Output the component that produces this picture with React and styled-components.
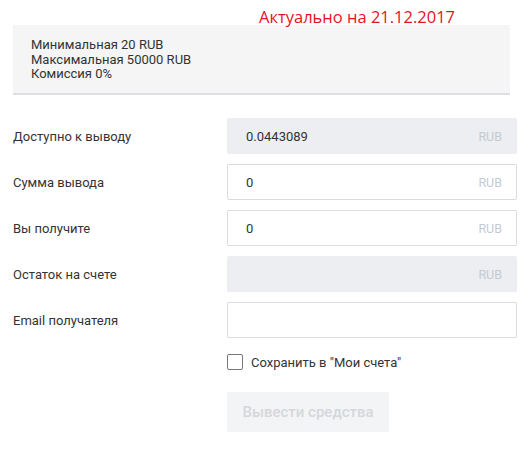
import styled, { createGlobalStyle } from "styled-components";
import { Fragment } from "react";

const Global = createGlobalStyle`
	body {
		margin: 0;
		background: #fff;
		font-family: Roboto, "Liberation Sans", sans-serif;
		color: #333;
	}
`;

const Page = styled.div`
	width: 530px;
	padding-left: 13px;
	box-sizing: border-box;
`;

const Notice = styled.div`
	height: 25px;
	padding-left: 246px;
	font-family: "Open Sans", "Liberation Sans", sans-serif;
	font-size: 16.5px;
	line-height: 34px;
	color: #e5131b;
	white-space: nowrap;
	position: relative;
	z-index: 1;
`;

const Limits = styled.div`
	width: 497px;
	height: 70px;
	box-sizing: border-box;
	padding: 13px 18px 0;
	background: #f5f5f5;
	border-bottom: 2px solid #dcdee2;
	font-size: 13px;
	line-height: 14.5px;
	color: #333;
`;

const Form = styled.div`
	display: grid;
	grid-template-columns: 214px 290px;
	row-gap: 10px;
	margin-top: 23px;
`;

const Label = styled.div`
	display: flex;
	align-items: center;
	font-size: 13px;
	color: #333;
`;

const Field = styled.div`
	display: flex;
	align-items: center;
	justify-content: space-between;
	box-sizing: border-box;
	height: 36px;
	padding: 0 14px 0 18px;
	border-radius: 2px;
	border: 1px solid ${(p) => (p.$disabled ? "#eceef1" : "#dcdcdc")};
	background: ${(p) => (p.$disabled ? "#eceef1" : "#fff")};
	font-size: 13px;
	color: #333;
`;

const Currency = styled.span`
	font-size: 12.5px;
	color: #c6cad0;
`;

const CheckRow = styled.label`
	grid-column: 2;
	display: flex;
	align-items: center;
	gap: 8px;
	height: 16px;
	margin-top: 6px;
	font-size: 13px;
	color: #333;
`;

const Box = styled.span`
	width: 14px;
	height: 14px;
	border: 1px solid #777;
	border-radius: 2px;
	background: #fff;
`;

const Submit = styled.button`
	grid-column: 2;
	justify-self: start;
	display: flex;
	align-items: center;
	justify-content: center;
	width: 162px;
	height: 40px;
	margin-top: 12px;
	border: none;
	border-radius: 1px;
	background: #f3f4f6;
	color: #d4d7db;
	font-family: Roboto, "Liberation Sans", sans-serif;
	font-size: 15px;
	font-weight: 500;
	padding: 0;
`;

const rows = [
	{ label: "Доступно к выводу", value: "0.0443089", currency: "RUB", disabled: true },
	{ label: "Сумма вывода", value: "0", currency: "RUB" },
	{ label: "Вы получите", value: "0", currency: "RUB" },
	{ label: "Остаток на счете", value: "", currency: "RUB", disabled: true },
	{ label: "Email получателя", value: "", currency: "" },
];

export default function App() {
	return (
		<Page>
			<Global />
			<Notice>Актуально на 21.12.2017</Notice>
			<Limits>
				<div>Минимальная 20 RUB</div>
				<div>Максимальная 50000 RUB</div>
				<div>Комиссия 0%</div>
			</Limits>
			<Form>
				{rows.map((r) => (
					<Fragment key={r.label}>
						<Label>{r.label}</Label>
						<Field $disabled={r.disabled}>
							<span>{r.value}</span>
							<Currency>{r.currency}</Currency>
						</Field>
					</Fragment>
				))}
				<CheckRow>
					<Box />
					Сохранить в "Мои счета"
				</CheckRow>
				<Submit>Вывести средства</Submit>
			</Form>
		</Page>
	);
}
